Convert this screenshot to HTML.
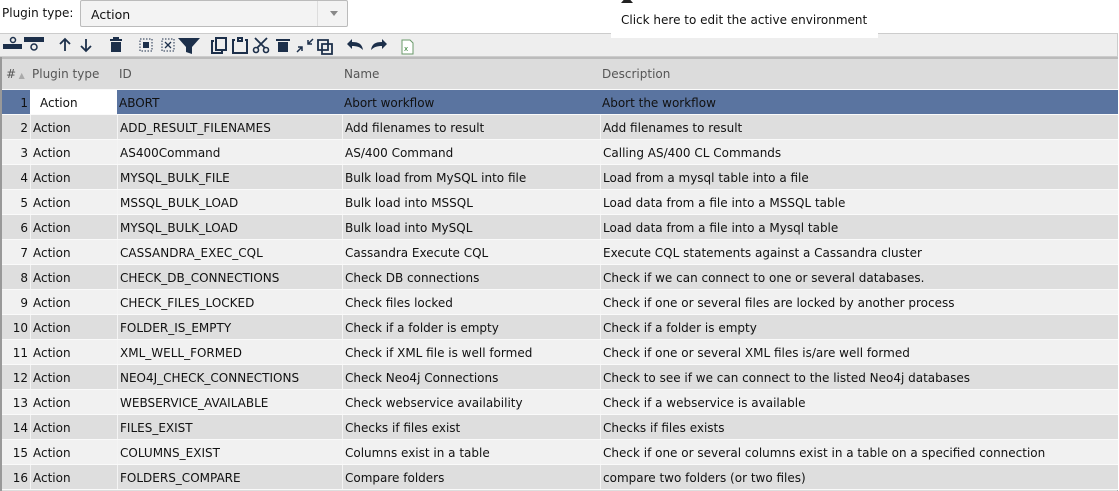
<!DOCTYPE html>
<html><head><meta charset="utf-8"><style>
*{box-sizing:border-box;margin:0;padding:0}
body{width:1119px;height:491px;overflow:hidden;background:#fff;font-family:"DejaVu Sans","Liberation Sans",sans-serif;font-size:12px;color:#111;position:relative}
.lbl{position:absolute;left:2px;top:6px;font-size:12px}
.sel{position:absolute;left:80px;top:0;width:268px;height:27px;border:1px solid #bbb;background:#f3f3f3;border-radius:2px}
.sel span{position:absolute;left:10px;top:6px;font-size:12.5px}
.sel i{position:absolute;left:236px;top:0;width:1px;height:25px;background:#ddd}
.sel b{position:absolute;left:249px;top:10px;border-left:4px solid transparent;border-right:4px solid transparent;border-top:5px solid #888}
.tip{position:absolute;left:611px;top:0;width:267px;height:38px;background:#fff;z-index:3}
.tip span{position:absolute;left:10px;top:13px;font-size:12px}
.tip b{position:absolute;left:10px;top:-4px;border-left:6px solid transparent;border-right:6px solid transparent;border-bottom:7px solid #222}
.bar{position:absolute;left:0;top:33px;width:1118px;height:24px;background:#eee;border:1px solid #ccc;border-left:none}
.bar svg{position:absolute;top:0}
.grid{position:absolute;left:0;top:57px;width:1118px;height:434px;background:#ddd;border-left:2px solid #999;border-right:1px solid #aaa}
.row{position:absolute;left:0;width:1116px;height:25px;border-bottom:1px solid #fafafa}
.row div{position:absolute;top:0;height:24px;line-height:26px;white-space:nowrap}
.c0{left:0;width:28px;text-align:right;padding-right:2px}
.c1{left:28px;width:87px;padding-left:2px;border-left:1px solid #f4f4f4}
.c2{left:115px;width:225px;padding-left:2px;border-left:1px solid #f4f4f4}
.c3{left:340px;width:258px;padding-left:2px;border-left:1px solid #f4f4f4}
.c4{left:598px;width:518px;padding-left:2px;border-left:1px solid #f4f4f4}
.e{background:#dedede}.o{background:#f1f1f1}
.h{background:#dcdcdc;color:#555;height:33px;border-top:2px solid #bbb}
.h div{height:31px;line-height:31px}
.s{background:#5a74a0}
.s div{border-left:none}
.s .c1{background:#fff;padding-left:10px}
</style></head><body>
<div class="lbl">Plugin type:</div>
<div class="sel"><span>Action</span><i></i><b></b></div>
<div class="tip"><b></b><span>Click here to edit the active environment</span></div>
<div class="bar">
<svg width="440" height="24" viewBox="0 0 440 24" fill="#1c2f4a" stroke="#1c2f4a">
<circle cx="13" cy="6" r="2.5" fill="none" stroke-width="1.5"/><rect x="3" y="10" width="19" height="5" stroke="none"/>
<rect x="24" y="3" width="20" height="5" stroke="none"/><circle cx="34" cy="13" r="3" fill="none" stroke-width="1.5"/>
<path d="M65 17V5M60 10l5-5 5 5M86 5v12M81 12l5 5 5-5" fill="none" stroke-width="1.8"/>
<path d="M110 6h12M113 4h6" stroke-width="2"/><rect x="111" y="8" width="10" height="10" stroke="none"/>
<rect x="140" y="5" width="12" height="12" fill="none" stroke-dasharray="1.5 1.5"/><rect x="143" y="8" width="6" height="6" stroke="none"/>
<rect x="162" y="5" width="12" height="12" fill="none" stroke-dasharray="1.5 1.5"/><path d="M165 8l6 6M171 8l-6 6" stroke-width="1.3"/>
<path d="M178 4h22l-8 9v7l-6-2v-5z" stroke="none"/>
<path d="M214 7h-2v12h10v-2M216 4h10v12h-10z" fill="none" stroke-width="2"/>
<path d="M235 6h-2v13h14v-13h-2M238 4h4v3h-4z" fill="none" stroke-width="2"/>
<circle cx="256" cy="16" r="2.5" fill="none" stroke-width="1.6"/><circle cx="266" cy="16" r="2.5" fill="none" stroke-width="1.6"/><path d="M257 14l10-10M265 14l-10-10" stroke-width="1.8"/>
<path d="M276 6h14" stroke-width="2"/><rect x="278" y="8" width="10" height="10" stroke="none"/>
<path d="M297 18l5-5M298 13h4v4M313 5l-5 5M308 6v4h4" fill="none" stroke-width="1.5"/>
<path d="M318 6h10v10h-10z M322 10h10v10h-10z" fill="none" stroke-width="1.8"/>
<path d="M347 10l5-5v3c7 0 10 2 11 8-3-3-6-4-11-4v3z" stroke="none"/>
<path d="M387 10l-5-5v3c-7 0-10 2-11 8 3-3 6-4 11-4v3z" stroke="none"/>
<path d="M402 6h8l3 3v11h-11z" fill="#fff" stroke="#6a9a6a" stroke-width="1"/><text x="404" y="17" font-size="7" fill="#2a7a2a" stroke="none" font-family="DejaVu Sans">x</text>
</svg></div>
<div class="grid">
<div class="row h" style="top:0"><div class="c0" style="text-align:left;padding-left:4px">#<span style="font-size:8px;color:#aaa"> ▲</span></div><div class="c1" style="border:none">Plugin type</div><div class="c2" style="border:none">ID</div><div class="c3" style="border:none">Name</div><div class="c4" style="border:none">Description</div></div>
<div class="row s" style="top:33px"><div class="c0">1</div><div class="c1">Action</div><div class="c2">ABORT</div><div class="c3">Abort workflow</div><div class="c4">Abort the workflow</div></div>
<div class="row e" style="top:58px"><div class="c0">2</div><div class="c1">Action</div><div class="c2">ADD_RESULT_FILENAMES</div><div class="c3">Add filenames to result</div><div class="c4">Add filenames to result</div></div>
<div class="row o" style="top:83px"><div class="c0">3</div><div class="c1">Action</div><div class="c2">AS400Command</div><div class="c3">AS/400 Command</div><div class="c4">Calling AS/400 CL Commands</div></div>
<div class="row e" style="top:108px"><div class="c0">4</div><div class="c1">Action</div><div class="c2">MYSQL_BULK_FILE</div><div class="c3">Bulk load from MySQL into file</div><div class="c4">Load from a mysql table into a file</div></div>
<div class="row o" style="top:133px"><div class="c0">5</div><div class="c1">Action</div><div class="c2">MSSQL_BULK_LOAD</div><div class="c3">Bulk load into MSSQL</div><div class="c4">Load data from a file into a MSSQL table</div></div>
<div class="row e" style="top:158px"><div class="c0">6</div><div class="c1">Action</div><div class="c2">MYSQL_BULK_LOAD</div><div class="c3">Bulk load into MySQL</div><div class="c4">Load data from a file into a Mysql table</div></div>
<div class="row o" style="top:183px"><div class="c0">7</div><div class="c1">Action</div><div class="c2">CASSANDRA_EXEC_CQL</div><div class="c3">Cassandra Execute CQL</div><div class="c4">Execute CQL statements against a Cassandra cluster</div></div>
<div class="row e" style="top:208px"><div class="c0">8</div><div class="c1">Action</div><div class="c2">CHECK_DB_CONNECTIONS</div><div class="c3">Check DB connections</div><div class="c4">Check if we can connect to one or several databases.</div></div>
<div class="row o" style="top:233px"><div class="c0">9</div><div class="c1">Action</div><div class="c2">CHECK_FILES_LOCKED</div><div class="c3">Check files locked</div><div class="c4">Check if one or several files are locked by another process</div></div>
<div class="row e" style="top:258px"><div class="c0">10</div><div class="c1">Action</div><div class="c2">FOLDER_IS_EMPTY</div><div class="c3">Check if a folder is empty</div><div class="c4">Check if a folder is empty</div></div>
<div class="row o" style="top:283px"><div class="c0">11</div><div class="c1">Action</div><div class="c2">XML_WELL_FORMED</div><div class="c3">Check if XML file is well formed</div><div class="c4">Check if one or several XML files is/are well formed</div></div>
<div class="row e" style="top:308px"><div class="c0">12</div><div class="c1">Action</div><div class="c2">NEO4J_CHECK_CONNECTIONS</div><div class="c3">Check Neo4j Connections</div><div class="c4">Check to see if we can connect to the listed Neo4j databases</div></div>
<div class="row o" style="top:333px"><div class="c0">13</div><div class="c1">Action</div><div class="c2">WEBSERVICE_AVAILABLE</div><div class="c3">Check webservice availability</div><div class="c4">Check if a webservice is available</div></div>
<div class="row e" style="top:358px"><div class="c0">14</div><div class="c1">Action</div><div class="c2">FILES_EXIST</div><div class="c3">Checks if files exist</div><div class="c4">Checks if files exists</div></div>
<div class="row o" style="top:383px"><div class="c0">15</div><div class="c1">Action</div><div class="c2">COLUMNS_EXIST</div><div class="c3">Columns exist in a table</div><div class="c4">Check if one or several columns exist in a table on a specified connection</div></div>
<div class="row e" style="top:408px"><div class="c0">16</div><div class="c1">Action</div><div class="c2">FOLDERS_COMPARE</div><div class="c3">Compare folders</div><div class="c4">compare two folders (or two files)</div></div>
</div>
</body></html>
